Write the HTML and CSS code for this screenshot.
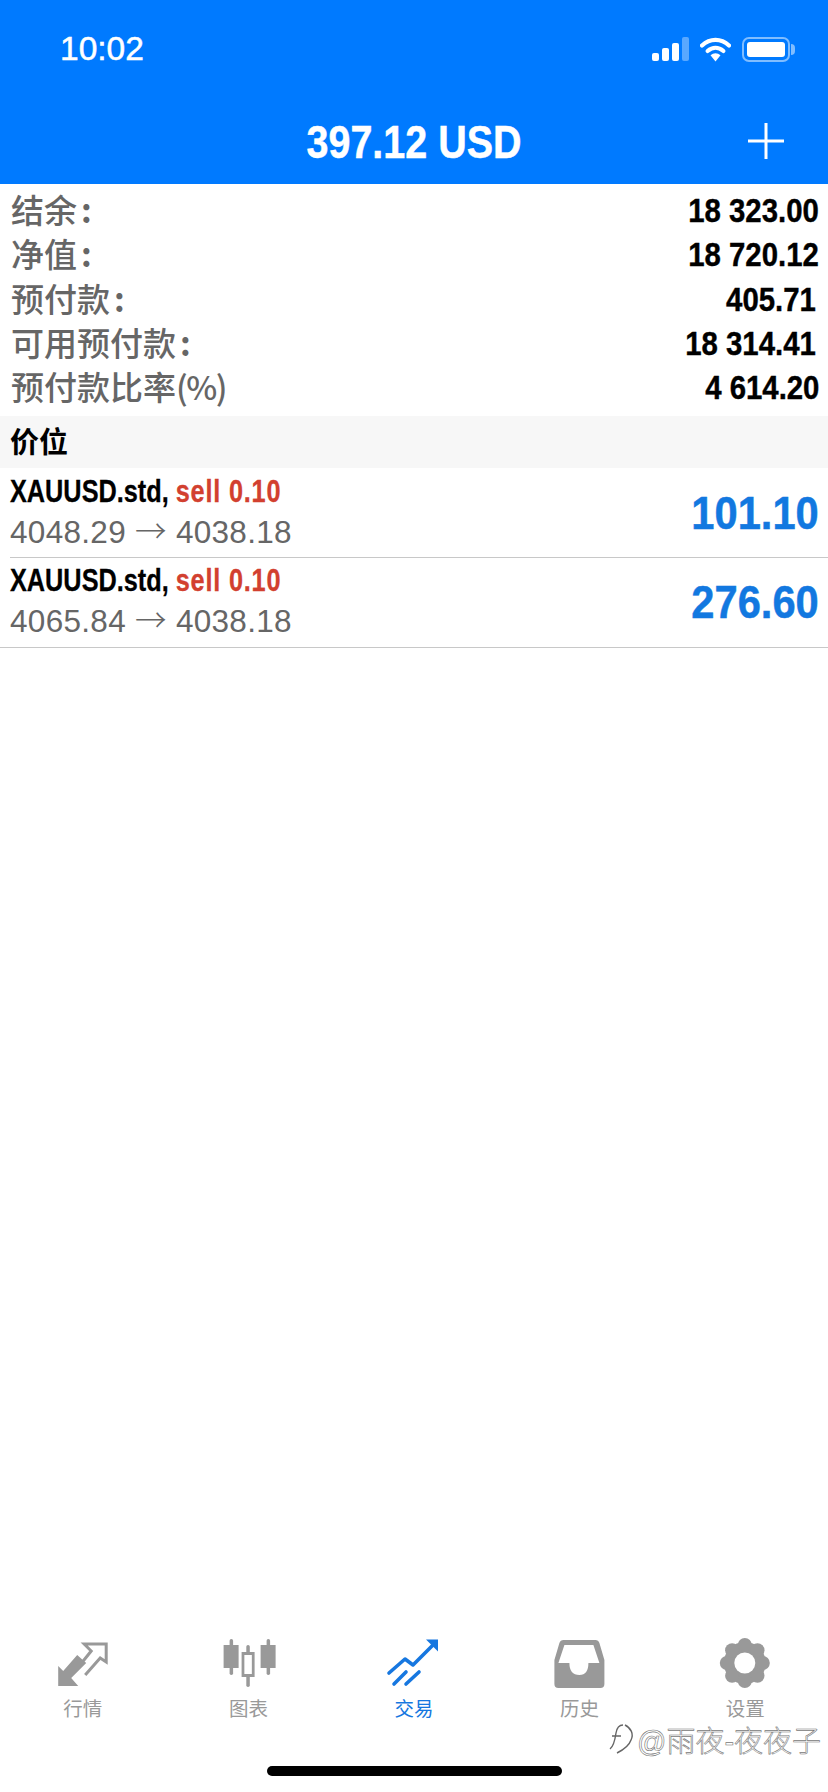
FILE: index.html
```html
<!DOCTYPE html>
<html lang="zh">
<head>
    <meta charset="UTF-8">
    <title>交易</title>
    <link rel="stylesheet" href="styles.css">
</head>
<body>
    <div class="page">
        <!-- 顶部 -->
        <div class="top">
            <div class="status">
                <span class="time">10:02</span>
                <div class="status-icons">
                    <div class="signal">
                        <i class="bar1"></i><i class="bar2"></i><i class="bar3"></i><i class="bar4"></i>
                    </div>
                    <svg class="wifi" width="31" height="25" viewBox="0 0 31 25">
                        <path d="M2 8.5 C10 1 21 1 29 8.5" fill="none" stroke="#fff" stroke-width="4.2" stroke-linecap="round"/>
                        <path d="M7.6 14 C12.5 9.8 18.5 9.8 23.4 14" fill="none" stroke="#fff" stroke-width="4.2" stroke-linecap="round"/>
                        <path d="M10.5 18.3 C13.5 15.6 17.5 15.6 20.5 18.3 L15.5 24.5Z" fill="#fff"/>
                    </svg>
                    <div class="battery"><div class="battery-fill"></div></div>
                </div>
            </div>
            <div class="titlebar">
                <span class="total">397.12 USD</span>
                <svg class="plus" width="36" height="36" viewBox="0 0 36 36">
                    <path d="M18 0V36M0 18H36" stroke="#fff" stroke-width="3"/>
                </svg>
            </div>
        </div>

        <!-- 账户 -->
        <div class="summary">
            <div class="summary-row"><span class="label">结余<span class="colon">:</span></span><span class="value">18 323.00</span></div>
            <div class="summary-row"><span class="label">净值<span class="colon">:</span></span><span class="value">18 720.12</span></div>
            <div class="summary-row"><span class="label">预付款<span class="colon">:</span></span><span class="value inset">405.71</span></div>
            <div class="summary-row"><span class="label">可用预付款<span class="colon">:</span></span><span class="value inset">18 314.41</span></div>
            <div class="summary-row"><span class="label">预付款比率<span class="percent">(%)</span></span><span class="value">4 614.20</span></div>
        </div>

        <div class="section">价位</div>

        <!-- 持仓 -->
        <div class="position first">
            <div class="position-info">
                <div class="symbol">XAUUSD.std, <span class="side">sell 0.10</span></div>
                <div class="prices">4048.29 <span class="arrow">→</span> 4038.18</div>
            </div>
            <span class="profit">101.10</span>
        </div>
        <div class="position">
            <div class="position-info">
                <div class="symbol">XAUUSD.std, <span class="side">sell 0.10</span></div>
                <div class="prices">4065.84 <span class="arrow">→</span> 4038.18</div>
            </div>
            <span class="profit">276.60</span>
        </div>

        <!-- 底部导航 -->
        <div class="tabs">
            <div class="tab">
                <svg class="tab-icon" width="70" height="66" viewBox="-2.2 0 70 66">
                    <polygon points="8,36 13,41 27,25 36,33 21,48 28,56 8,56" fill="#999"/>
                    <path d="M33 31 L41 21 L34 14 H56 V32 L50 28 L35 45" fill="none" stroke="#999" stroke-width="3"/>
                </svg>
                <span class="tab-label">行情</span>
            </div>
            <div class="tab">
                <svg class="tab-icon" width="70" height="66" viewBox="-1.6 0 70 66">
                    <rect x="9" y="15" width="15" height="23" fill="#999"/>
                    <rect x="15" y="9" width="3.5" height="36" rx="1.7" fill="#999"/>
                    <rect x="46" y="15" width="15" height="23" fill="#999"/>
                    <rect x="52" y="9" width="3.5" height="36" rx="1.7" fill="#999"/>
                    <rect x="28.5" y="23.5" width="10" height="22" fill="none" stroke="#999" stroke-width="3"/>
                    <rect x="31.7" y="15" width="3.5" height="42" rx="1.7" fill="#999"/>
                    <rect x="30" y="25" width="7" height="19" fill="#fff"/>
                </svg>
                <span class="tab-label">图表</span>
            </div>
            <div class="tab active">
                <svg class="tab-icon" width="70" height="66" viewBox="-1 0 70 66">
                    <path d="M9 43 L25 29 L33 35 L55 13" fill="none" stroke="#1677e0" stroke-width="3.6" stroke-linecap="round" stroke-linejoin="round"/>
                    <path d="M46 9.5 H58 V21.5 Z" fill="#1677e0"/>
                    <path d="M14 54 L26 42 M26 54 L39 42" fill="none" stroke="#1677e0" stroke-width="3.6" stroke-linecap="round"/>
                </svg>
                <span class="tab-label">交易</span>
            </div>
            <div class="tab">
                <svg class="tab-icon" width="70" height="66" viewBox="0.6 0 70 66">
                    <path fill-rule="evenodd" fill="#999" d="M19 10 H51 Q54 10 55 13 L60 30 V54 Q60 58 56 58 H14 Q10 58 10 54 V30 L15 13 Q16 10 19 10Z M20 15 L14 33 H25 Q25 45 35 45 Q44 45 44 33 H55 L49 15Z"/>
                </svg>
                <span class="tab-label">历史</span>
            </div>
            <div class="tab">
                <svg class="tab-icon" width="70" height="66" viewBox="0.7 0 70 66">
                    <g fill="#999">
                        <circle cx="35.5" cy="33" r="21"/>
                        <circle cx="35.5" cy="15" r="7"/>
                        <circle cx="48.2" cy="20.3" r="7"/>
                        <circle cx="53.5" cy="33" r="7"/>
                        <circle cx="48.2" cy="45.7" r="7"/>
                        <circle cx="35.5" cy="51" r="7"/>
                        <circle cx="22.8" cy="45.7" r="7"/>
                        <circle cx="17.5" cy="33" r="7"/>
                        <circle cx="22.8" cy="20.3" r="7"/>
                    </g>
                    <circle cx="35.5" cy="33" r="10.5" fill="#fff"/>
                </svg>
                <span class="tab-label">设置</span>
            </div>
        </div>

        <div class="home-bar"><div class="home-indicator"></div></div>

        <!-- 水印 -->
        <div class="watermark">
            <svg class="watermark-logo" width="26" height="34" viewBox="0 0 26 34">
                <path d="M14 3 C10 3 8 5 7 11 C6 18 5 24 1 27 M3 14 H12 M16 3 C22 6 25 12 22 18 C20 24 14 28 8 31" fill="none" stroke="#666" stroke-width="1.4"/>
            </svg>
            <span class="watermark-text">@雨夜-夜夜子</span>
        </div>
    </div>
</body>
</html>
```

FILE: styles.css
```css
body {
    margin: 0;
    background: #fff;
    font-family: "Liberation Sans", "Noto Sans CJK SC", sans-serif;
}
.page {
    position: relative;
    display: flex;
    flex-direction: column;
    width: 828px;
    height: 1792px;
    overflow: hidden;
}
.top {
    height: 184px;
    background: #007aff;
    color: #fff;
}
.status {
    display: flex;
    justify-content: space-between;
    align-items: center;
    height: 50px;
    padding: 24px 38px 0 60px;
}
.time {
    font-size: 33.5px;
    line-height: 50px;
    -webkit-text-stroke: 0.5px #fff;
}
.status-icons {
    display: flex;
    align-items: center;
    gap: 11px;
}
.signal {
    display: flex;
    align-items: flex-end;
    gap: 3px;
    height: 24px;
}
.signal i {
    display: block;
    width: 7px;
    border-radius: 2px;
    background: #fff;
}
.bar1 { height: 8px; }
.bar2 { height: 13px; }
.bar3 { height: 18px; }
.signal .bar4 {
    height: 24px;
    background: rgba(255, 255, 255, 0.35);
}
.battery {
    position: relative;
    box-sizing: border-box;
    width: 48px;
    height: 25px;
    padding: 3px;
    border: 2px solid rgba(255, 255, 255, 0.5);
    border-radius: 7px;
}
.battery:after {
    content: "";
    position: absolute;
    top: 5px;
    right: -7px;
    width: 4px;
    height: 11px;
    border-radius: 0 4px 4px 0;
    background: rgba(255, 255, 255, 0.5);
}
.battery-fill {
    height: 100%;
    border-radius: 3px;
    background: #fff;
}
.titlebar {
    position: relative;
    display: flex;
    justify-content: center;
    align-items: center;
    height: 60px;
    margin-top: 37px;
    padding-bottom: 13px;
}
.total {
    display: inline-block;
    font-size: 47px;
    font-weight: bold;
    -webkit-text-stroke: 0.5px #fff;
    transform: scaleX(0.84);
}
.plus {
    position: absolute;
    top: 12px;
    right: 44px;
}
.summary {
    padding: 5px 9px 5.5px 11px;
}
.summary-row {
    display: flex;
    justify-content: space-between;
    align-items: center;
    height: 44.3px;
}
.label {
    margin-bottom: 4px;
    color: #666;
    font-family: "Noto Sans CJK SC", sans-serif;
    font-size: 33px;
    font-weight: 500;
    line-height: 40px;
}
.colon {
    margin-left: 4px;
    font-weight: 700;
}
.percent {
    letter-spacing: -1.5px;
}
.value {
    display: inline-block;
    color: #000;
    font-size: 33px;
    font-weight: bold;
    -webkit-text-stroke: 0.4px #000;
    transform: scaleX(0.89);
    transform-origin: right center;
}
.inset {
    margin-right: 3px;
}
.section {
    box-sizing: border-box;
    height: 52px;
    padding: 3px 0 0 10px;
    background: #f7f7f7;
    color: #000;
    font-size: 29px;
    font-weight: 700;
    line-height: 49px;
}
.position {
    display: flex;
    justify-content: space-between;
    align-items: center;
    height: 89px;
    padding: 0 9px 0 10px;
    border-bottom: 1px solid #c8c8c8;
}
.position.first {
    border-bottom: 0;
    height: 90px;
    background: linear-gradient(#c8c8c8, #c8c8c8) no-repeat 10px 100% / 100% 1px;
}
.position-info {
    margin-top: -2px;
    white-space: nowrap;
}
.symbol {
    height: 41px;
    color: #000;
    font-size: 32px;
    font-weight: bold;
    line-height: 41px;
    -webkit-text-stroke: 0.3px #000;
    transform: scaleX(0.79);
    transform-origin: left center;
}
.side {
    color: #d2402f;
    letter-spacing: 1px;
    -webkit-text-stroke: 0.3px #d2402f;
}
.prices {
    height: 41px;
    color: #666;
    font-size: 31.5px;
    line-height: 41px;
    letter-spacing: 0.3px;
}
.arrow {
    font-family: "Noto Sans CJK SC", sans-serif;
    font-weight: 300;
    line-height: 30px;
}
.profit {
    display: inline-block;
    color: #1278e0;
    font-size: 46px;
    font-weight: bold;
    -webkit-text-stroke: 0.5px #1278e0;
    transform: scaleX(0.905);
    transform-origin: right center;
}
.tabs {
    display: flex;
    margin-top: auto;
    height: 92px;
}
.tab {
    flex: 1;
    display: flex;
    flex-direction: column;
    align-items: center;
    color: #999;
}
.tab-icon {
    flex-shrink: 0;
}
.tab-label {
    font-size: 19.5px;
    line-height: 26px;
}
.tab.active {
    color: #1677e0;
}
.home-bar {
    display: flex;
    justify-content: center;
    height: 26px;
    padding-top: 10px;
    margin-top: 34px;
}
.home-indicator {
    width: 295px;
    height: 10px;
    border-radius: 5px;
    background: #000;
}
.watermark {
    position: absolute;
    left: 609px;
    top: 1718px;
    display: flex;
    align-items: center;
    gap: 2px;
}
.watermark-text {
    color: #fff;
    font-size: 29px;
    font-weight: 300;
    white-space: nowrap;
    -webkit-text-stroke: 0.6px #777;
}
```
